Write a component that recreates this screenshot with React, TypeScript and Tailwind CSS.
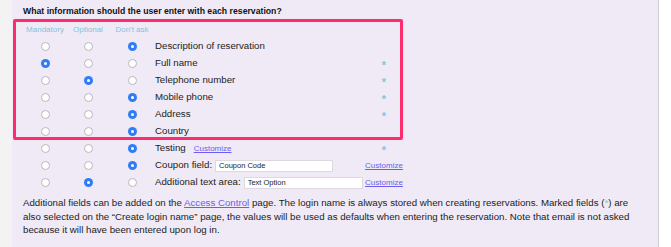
type Choice = 0 | 1 | 2;

type Field = {
  label: string;
  choice: Choice;
  marked?: boolean;
  inline?: boolean;
  input?: { value: string; width: string };
};

const fields: Field[] = [
  { label: 'Description of reservation', choice: 2 },
  { label: 'Full name', choice: 0, marked: true },
  { label: 'Telephone number', choice: 1, marked: true },
  { label: 'Mobile phone', choice: 2, marked: true },
  { label: 'Address', choice: 2, marked: true },
  { label: 'Country', choice: 2 },
  { label: 'Testing', choice: 2, marked: true, inline: true },
  { label: 'Coupon field:', choice: 2, input: { value: 'Coupon Code', width: 'w-[118px]' } },
  { label: 'Additional text area:', choice: 1, input: { value: 'Text Option', width: 'w-[119px]' } },
];

function Radio({ checked }: { checked: boolean }) {
  if (checked) {
    return (
      <span className="flex h-[9px] w-[9px] items-center justify-center rounded-full bg-[#2f7cf6]">
        <span className="h-[3px] w-[3px] rounded-full bg-white" />
      </span>
    );
  }
  return <span className="h-[9px] w-[9px] rounded-full border border-[#b9b7bd] bg-white" />;
}

function Customize() {
  return <span className="text-[8px] text-[#6d5cf2] underline">Customize</span>;
}

export default function App() {
  return (
    <div className="flex h-[247px] w-[671px] bg-white font-['Liberation_Sans',Arial,sans-serif] text-[#1c1c1c]">
      <div className="w-[12px] shrink-0 bg-[#f3f3f4]" />
      <div className="relative w-[647px] shrink-0 border-r border-[#d2ced6] bg-[#efeaf5] pl-[11px]">
        <div className="h-[21px] pt-[5px] text-[8.7px] font-bold leading-[12px] text-[#111]">
          What information should the user enter with each reservation?
        </div>

        <div className="grid grid-cols-[44px_42px_46px_210px_38px] text-[9.7px]">
          <div className="flex h-[17px] items-center justify-center text-[8px] text-[#84c4dc]">Mandatory</div>
          <div className="flex h-[17px] items-center justify-center text-[8px] text-[#84c4dc]">Optional</div>
          <div className="flex h-[17px] items-center justify-center text-[8px] text-[#84c4dc]">Don't ask</div>
          <div />
          <div />
          {fields.map((f) => (
            <div key={f.label} className="contents">
              {[0, 1, 2].map((c) => (
                <div key={c} className="flex h-[17px] items-center justify-center">
                  <Radio checked={f.choice === c} />
                </div>
              ))}
              <div className="flex h-[17px] items-center gap-[8px] whitespace-nowrap">
                <span>{f.label}</span>
                {f.inline && <Customize />}
                {f.input && (
                  <span
                    className={`${f.input.width} -ml-[5px] flex h-[12px] items-center border border-[#dcdadf] bg-white px-[3px] text-[7.5px] leading-none`}
                  >
                    {f.input.value}
                  </span>
                )}
              </div>
              <div className="flex h-[17px] items-center justify-center">
                {f.input ? (
                  <Customize />
                ) : f.marked ? (
                  <span className="pt-[3px] text-[11px] font-bold leading-none text-[#86c3da]">*</span>
                ) : null}
              </div>
            </div>
          ))}
        </div>

        <p className="mt-[5px] w-[615px] text-[9.7px] leading-[13.5px]">
          Additional fields can be added on the{' '}
          <span className="text-[#6d5cf2] underline">Access Control</span> page. The login name is always
          stored when creating reservations. Marked fields (<span className="text-[#86c3da]">*</span>) are
          also selected on the “Create login name” page, the values will be used as defaults when entering
          the reservation. Note that email is not asked because it will have been entered upon log in.
        </p>

        <div className="pointer-events-none absolute left-[1px] top-[19px] h-[121px] w-[390px] rounded-[2px] border-[3px] border-[#fd2c6c]" />
      </div>
    </div>
  );
}
